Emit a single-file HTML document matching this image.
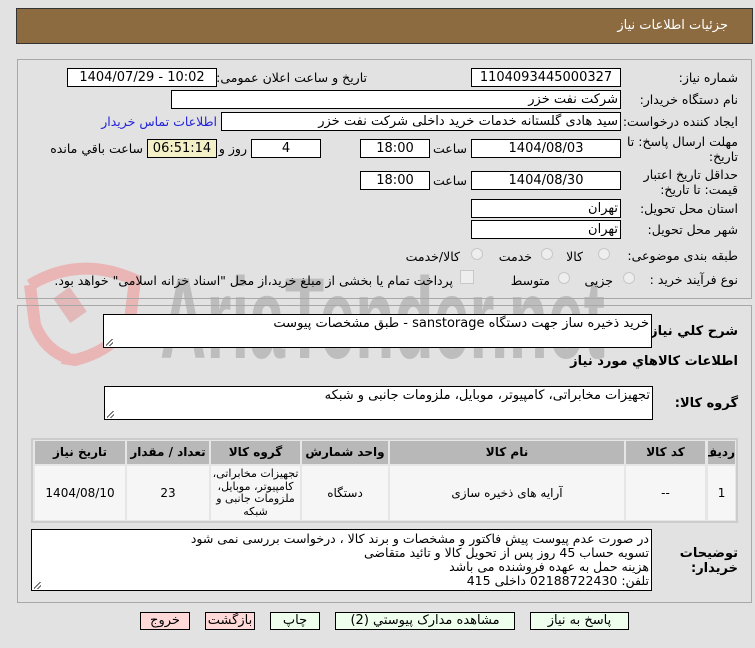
<!DOCTYPE html>
<html><head><meta charset="utf-8">
<style>
body{margin:0;width:755px;height:648px;background:#e2e2e2;position:relative;overflow:hidden;font-family:"DejaVu Sans","Liberation Sans",sans-serif;font-size:12px;color:#000}
.a{position:absolute}
.box{position:absolute;background:#fff;border:1px solid #000;box-sizing:border-box;height:19px;line-height:17px;text-align:center;font-size:13px;white-space:nowrap;overflow:hidden}
.r{text-align:right;padding-right:2px;direction:rtl}
.l{position:absolute;direction:rtl;text-align:right;white-space:nowrap;font-size:12.5px}
.panel{position:absolute;border:1px solid #a8a8a8;box-sizing:border-box}
.rad{position:absolute;width:12px;height:12px;border-radius:50%;border:1px solid #c8c8c8;background:#eee;box-sizing:border-box}
.btn{position:absolute;top:612px;height:18px;border:1px solid #000;box-sizing:border-box;text-align:center;line-height:16px;font-size:13px;background:#eeffee}
.red{background:#ffd8d8}
.th{position:absolute;top:441px;height:23px;background:#b8b8b8;font-weight:bold;font-size:12px;text-align:center;line-height:23px;direction:rtl;white-space:nowrap;overflow:hidden}
.td{position:absolute;top:466px;height:54px;background:#f6f6f6;text-align:center;direction:rtl;display:flex;align-items:center;justify-content:center;font-size:12px;line-height:13px}
.grip{position:absolute;left:2px;bottom:1px;width:7px;height:7px;background:linear-gradient(135deg,transparent 40%,#555 40%,#555 50%,transparent 50%,transparent 70%,#555 70%,#555 80%,transparent 80%)}
</style></head><body>
<div class="a" style="left:16px;top:8px;width:737px;height:36px;background:#8c6b40;border:1px solid #333;box-sizing:border-box"></div>
<div class="l" style="right:27px;top:18px;color:#fff;font-size:13px">جزئیات اطلاعات نیاز</div>

<svg class="a" style="left:0;top:240px" width="620" height="130">
<path d="M30 45 Q80 15 135 40 L130 80 Q115 110 75 120 L62 118 M30 45 L35 85 Q45 110 68 118" fill="none" stroke="#e9b5b5" stroke-width="12"/>
<rect x="60" y="50" width="20" height="30" fill="#e3b8b8" transform="rotate(-35 70 65)"/>
<text x="160" y="118" font-family="Liberation Sans" font-weight="bold" font-size="115" fill="#bdbdbd" textLength="445" lengthAdjust="spacingAndGlyphs">AriaTender.net</text>
</svg>

<div class="panel" style="left:17px;top:59px;width:735px;height:240px"></div>
<div class="panel" style="left:17px;top:305px;width:735px;height:298px"></div>

<div class="l" style="right:17px;top:70px">شماره نیاز:</div>
<div class="box" style="left:471px;top:68px;width:150px">1104093445000327</div>
<div class="l" style="right:388px;top:70px">تاریخ و ساعت اعلان عمومی:</div>
<div class="box" style="left:67px;top:68px;width:150px">1404/07/29 - 10:02</div>

<div class="l" style="right:17px;top:92px">نام دستگاه خریدار:</div>
<div class="box r" style="left:171px;top:90px;width:450px">شرکت نفت خزر</div>

<div class="l" style="right:17px;top:114px">ایجاد کننده درخواست:</div>
<div class="box r" style="left:221px;top:112px;width:400px">سید هادی گلستانه خدمات خرید داخلی شرکت نفت خزر</div>
<div class="l" style="right:538px;top:114px;color:#2222dd">اطلاعات تماس خریدار</div>

<div class="l" style="right:17px;top:134px;line-height:15px;font-size:12.5px">مهلت ارسال پاسخ: تا<br>تاریخ:</div>
<div class="box" style="left:471px;top:139px;width:150px">1404/08/03</div>
<div class="l" style="right:288px;top:141px">ساعت</div>
<div class="box" style="left:360px;top:139px;width:70px">18:00</div>
<div class="box" style="left:251px;top:139px;width:70px">4</div>
<div class="l" style="right:508px;top:141px">روز و</div>
<div class="box" style="left:147px;top:139px;width:70px;background:#f3f0c8">06:51:14</div>
<div class="l" style="right:612px;top:141px">ساعت باقي مانده</div>

<div class="l" style="right:17px;top:167px;line-height:15px">حداقل تاریخ اعتبار<br>قیمت: تا تاریخ:</div>
<div class="box" style="left:471px;top:171px;width:150px">1404/08/30</div>
<div class="l" style="right:288px;top:173px">ساعت</div>
<div class="box" style="left:360px;top:171px;width:70px">18:00</div>

<div class="l" style="right:17px;top:201px">استان محل تحویل:</div>
<div class="box r" style="left:471px;top:199px;width:150px">تهران</div>
<div class="l" style="right:17px;top:222px">شهر محل تحویل:</div>
<div class="box r" style="left:471px;top:220px;width:150px">تهران</div>

<div class="l" style="right:17px;top:248px">طبقه بندی موضوعی:</div>
<div class="rad" style="left:598px;top:248px"></div><div class="l" style="right:172px;top:249px">کالا</div>
<div class="rad" style="left:541px;top:248px"></div><div class="l" style="right:223px;top:249px">خدمت</div>
<div class="rad" style="left:471px;top:248px"></div><div class="l" style="right:295px;top:249px">کالا/خدمت</div>

<div class="l" style="right:17px;top:272px">نوع فرآیند خرید :</div>
<div class="rad" style="left:623px;top:272px"></div><div class="l" style="right:142px;top:273px">جزیی</div>
<div class="rad" style="left:558px;top:272px"></div><div class="l" style="right:205px;top:273px">متوسط</div>
<div class="a" style="left:460px;top:270px;width:12px;height:12px;border:1px solid #c8c8c8;background:#eee"></div>
<div class="l" style="right:302px;top:273px">پرداخت تمام یا بخشی از مبلغ خرید،از محل "اسناد خزانه اسلامی" خواهد بود.</div>

<div class="l" style="right:17px;top:324px;font-weight:bold;font-size:13px">شرح کلي نیاز:</div>
<div class="box r" style="left:103px;top:314px;width:549px;height:34px;text-align:right">خرید ذخیره ساز جهت دستگاه sanstorage - طبق مشخصات پیوست<div class="grip"></div></div>
<div class="l" style="right:17px;top:354px;font-weight:bold;font-size:13px">اطلاعات کالاهاي مورد نیاز</div>
<div class="l" style="right:17px;top:396px;font-weight:bold;font-size:13px">گروه کالا:</div>
<div class="box r" style="left:104px;top:386px;width:549px;height:34px;text-align:right">تجهیزات مخابراتی، کامپیوتر، موبایل، ملزومات جانبی و شبکه<div class="grip"></div></div>

<div class="a" style="left:31px;top:438px;width:707px;height:85px;border:2px solid #ccc;box-sizing:border-box;background:#e6e6e6"></div>
<div class="th" style="left:708px;width:27px">ردیف</div>
<div class="th" style="left:626px;width:79px">کد کالا</div>
<div class="th" style="left:390px;width:234px">نام کالا</div>
<div class="th" style="left:302px;width:86px">واحد شمارش</div>
<div class="th" style="left:211px;width:89px">گروه کالا</div>
<div class="th" style="left:127px;width:82px">تعداد / مقدار</div>
<div class="th" style="left:35px;width:90px">تاریخ نیاز</div>
<div class="td" style="left:708px;width:27px">1</div>
<div class="td" style="left:626px;width:79px">--</div>
<div class="td" style="left:390px;width:234px">آرایه های ذخیره سازی</div>
<div class="td" style="left:302px;width:86px">دستگاه</div>
<div class="td" style="left:211px;width:89px;font-size:11px;line-height:12.5px;overflow:hidden">تجهیزات مخابراتی، کامپیوتر، موبایل، ملزومات جانبی و شبکه</div>
<div class="td" style="left:127px;width:82px">23</div>
<div class="td" style="left:35px;width:90px">1404/08/10</div>

<div class="l" style="right:17px;top:546px;font-weight:bold;font-size:13px;line-height:15px">توضیحات<br>خریدار:</div>
<div class="box r" style="left:31px;top:529px;width:621px;height:62px;text-align:right;line-height:14px;padding-top:2px;white-space:pre;font-size:12.5px">در صورت عدم پیوست پیش فاکتور و مشخصات و برند کالا ، درخواست بررسی نمی شود
تسویه حساب 45 روز پس از تحویل کالا و تائید متقاضی
هزینه حمل به عهده فروشنده می باشد
تلفن: 02188722430 داخلی 415<div class="grip"></div></div>

<div class="btn red" style="left:140px;width:50px">خروج</div>
<div class="btn red" style="left:205px;width:50px">بازگشت</div>
<div class="btn" style="left:270px;width:50px">چاپ</div>
<div class="btn" style="left:335px;width:180px">مشاهده مدارک پیوستي (2)</div>
<div class="btn" style="left:530px;width:99px">پاسخ به نیاز</div>
</body></html>
